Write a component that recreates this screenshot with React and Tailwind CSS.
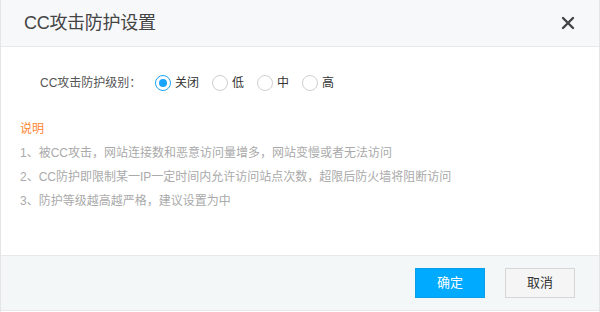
export default function App() {
  const font = { fontFamily: '"Liberation Sans", "Noto Sans CJK SC", sans-serif' };
  const Radio = ({ checked, label }) => (
    <label className="flex items-center gap-[4px] mr-[13px]">
      <span className={`w-[16px] h-[16px] rounded-full border flex items-center justify-center bg-white ${checked ? 'border-[#1aa3ff]' : 'border-[#cfcfcf]'}`}>
        {checked && <span className="w-[8px] h-[8px] rounded-full bg-[#1aa3ff]" />}
      </span>
      <span className="text-[12px] text-[#333]">{label}</span>
    </label>
  );
  return (
    <div style={font} className="w-[600px] h-[312px] bg-white border-x border-[#e5e5e5] flex flex-col">
      <div className="h-[47px] bg-[#f7f8fa] border-b border-[#e6e8eb] flex items-center justify-between pl-[23px] pr-[24px]">
        <span className="text-[18px] text-[#444] tracking-[-0.3px] mt-[1px]">CC攻击防护设置</span>
        <svg width="14" height="14" viewBox="0 0 14 14"><path d="M2 2 L12 12 M12 2 L2 12" stroke="#444" strokeWidth="2.4" strokeLinecap="round" /></svg>
      </div>
      <div className="flex-1 flex flex-col">
        <div className="flex items-center mt-[27px] pl-[39px]">
          <span className="text-[12px] text-[#555] w-[115px]">CC攻击防护级别：</span>
          <Radio checked label="关闭" />
          <Radio label="低" />
          <Radio label="中" />
          <Radio label="高" />
        </div>
        <div className="mt-[25px] pl-[19px] flex flex-col text-[12px] leading-[24px]">
          <span className="text-[#ff8533]">说明</span>
          <span className="text-[#aaa]">1、被CC攻击，网站连接数和恶意访问量增多，网站变慢或者无法访问</span>
          <span className="text-[#aaa]">2、CC防护即限制某一IP一定时间内允许访问站点次数，超限后防火墙将阻断访问</span>
          <span className="text-[#aaa]">3、防护等级越高越严格，建议设置为中</span>
        </div>
      </div>
      <div className="h-[56px] bg-[#f4f7f8] border-t border-b border-[#e6e8eb] flex items-center justify-end pr-[24px] gap-[20px] mb-[1px]">
        <button className="w-[70px] h-[30px] bg-[#00aaff] border border-[#0a9ee8] text-white text-[13px]">确定</button>
        <button className="w-[70px] h-[30px] bg-[#f5f5f5] border border-[#d6d6d6] text-[#333] text-[13px]">取消</button>
      </div>
    </div>
  );
}
